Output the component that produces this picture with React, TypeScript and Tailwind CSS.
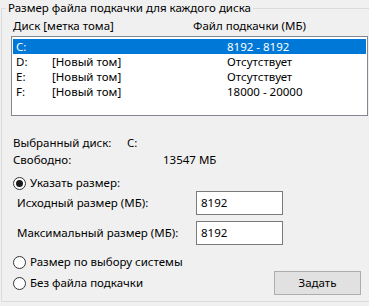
import React from "react";

function Radio({ checked, label }: { checked?: boolean; label: string }) {
  return (
    <div className="flex items-center h-[16px]">
      <div className="w-[13px] h-[13px] rounded-full border border-[#333333] bg-white flex items-center justify-center">
        {checked && <div className="w-[7px] h-[7px] rounded-full bg-[#1a1a1a]" />}
      </div>
      <span className="ml-[4px] leading-[16px]">{label}</span>
    </div>
  );
}

const rows = [
  { d: "C:", l: "", s: "8192 - 8192", sel: true },
  { d: "D:", l: "[Новый том]", s: "Отсутствует" },
  { d: "E:", l: "[Новый том]", s: "Отсутствует" },
  { d: "F:", l: "[Новый том]", s: "18000 - 20000" },
];

export default function App() {
  return (
    <div
      className="w-[369px] h-[306px] bg-[#f0f0f0] overflow-hidden text-[11.5px] text-black"
      style={{ fontFamily: '"Noto Sans", "Segoe UI", sans-serif' }}
    >
      <div className="relative ml-[1px] mt-[8px] w-[400px] h-[294px] border-t border-l border-b border-[#dcdcdc]">
        <div className="absolute -top-[9px] left-[4px] px-[2px] bg-[#f0f0f0] leading-[16px]">
          Размер файла подкачки для каждого диска
        </div>
        {/* column headers */}
        <div className="flex mt-[9px] pl-[11px] leading-[15px]">
          <span className="w-[180px]">Диск [метка тома]</span>
          <span>Файл подкачки (МБ)</span>
        </div>
        {/* list box */}
        <div className="mt-[3px] ml-[9px] w-[357px] h-[80px] border border-[#828790] bg-white pt-[2px] px-[1px]">
          {rows.map((r) => (
            <div
              key={r.d}
              className={
                "flex h-[15px] leading-[15px] pl-[3px] " +
                (r.sel ? "bg-[#0078d7] text-white" : "")
              }
            >
              <span className="w-[36px]">{r.d}</span>
              <span className="w-[175px]">{r.l}</span>
              <span>{r.s}</span>
            </div>
          ))}
        </div>
        {/* info */}
        <div className="mt-[18px] pl-[11px] leading-[17px]">
          <div className="flex">
            <span className="w-[114px]">Выбранный диск:</span>
            <span>C:</span>
          </div>
          <div className="flex">
            <span className="w-[150px]">Свободно:</span>
            <span>13547 МБ</span>
          </div>
        </div>
        {/* radios and inputs */}
        <div className="pl-[11px] mt-[7px] w-[370px]">
          <Radio checked label="Указать размер:" />
          <div className="flex items-center h-[24px] pl-[4px]">
            <span className="w-[179px]">Исходный размер (МБ):</span>
            <div className="w-[87px] h-[24px] border border-[#7a7a7a] bg-white pl-[4px] leading-[22px]">
              8192
            </div>
          </div>
          <div className="flex items-center h-[24px] mt-[6px] pl-[4px]">
            <span className="w-[179px]">Максимальный размер (МБ):</span>
            <div className="w-[87px] h-[24px] border border-[#7a7a7a] bg-white pl-[4px] leading-[22px]">
              8192
            </div>
          </div>
          <div className="mt-[9px]">
            <Radio label="Размер по выбору системы" />
          </div>
          <div className="flex items-center justify-between mt-[1px] h-[24px] w-[348px]">
            <Radio label="Без файла подкачки" />
            <div className="w-[87px] h-[24px] border border-[#adadad] bg-[#e1e1e1] flex items-center justify-center">
              Задать
            </div>
          </div>
        </div>
      </div>
    </div>
  );
}
